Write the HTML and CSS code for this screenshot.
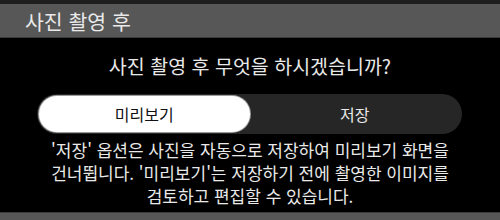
FILE: index.html
```html
<!DOCTYPE html>
<html lang="ko">
<head>
    <meta charset="UTF-8">
    <title>사진 촬영 후</title>
    <link rel="stylesheet" href="styles.css">
</head>
<body>

<div class="top-strip"></div>
<div class="header">
    <p>사진 촬영 후</p>
</div>

<div class="dialog">
    <p class="question">사진 촬영 후 무엇을 하시겠습니까?</p>

    <div class="segmented">
        <button class="segment selected">미리보기</button>
        <button class="segment">저장</button>
    </div>

    <p class="description">'저장' 옵션은 사진을 자동으로 저장하여 미리보기 화면을 건너뜁니다. '미리보기'는 저장하기 전에 촬영한 이미지를 검토하고 편집할 수 있습니다.</p>
</div>

<div class="next-row"></div>

</body>
</html>
```

FILE: styles.css
```css
* {
    box-sizing: border-box;
}

body {
    margin: 0;
    height: 220px;
    overflow: hidden;
    background-color: #000;
    color: #e9e9e9;
    font-family: "Noto Sans CJK KR", "Noto Sans", sans-serif;
}

p {
    margin: 0;
}

/* Dark line above the header */
.top-strip {
    height: 4px;
    background-color: #1e1e1e;
}

.header {
    height: 34px;
    display: flex;
    align-items: center;
    padding-left: 25px;
    background-color: #575757;
    border-bottom: 1px solid #3b3b3b;
    font-size: 20.5px;
}

.dialog {
    height: 174px;
    padding-top: 14px;
}

.question {
    text-align: center;
    font-size: 19.5px;
    line-height: 28px;
}

/* Two-option switch */
.segmented {
    display: flex;
    margin: 14px 38px 0 37px;
    height: 40px;
    padding: 2px;
    border-radius: 20px;
    background-color: #262626;
}

.segment {
    flex: 1;
    border: none;
    border-radius: 18px;
    background: none;
    color: #e9e9e9;
    font-family: inherit;
    font-size: 16px;
}

.segment.selected {
    background-color: #fff;
    color: #111;
    box-shadow: 0 0 0 1px #9a9a9a;
}

.description {
    margin: 4px 44px 0;
    text-align: center;
    font-size: 17px;
    line-height: 23px;
    word-break: keep-all;
}

.next-row {
    height: 8px;
    background-color: #575757;
    border-top: 1px solid #3b3b3b;
}
```
